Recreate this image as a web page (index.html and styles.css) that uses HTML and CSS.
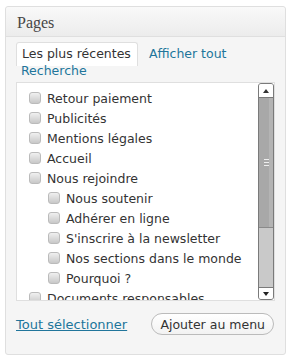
FILE: index.html
```html
<!doctype html>
<html lang="fr">
    <head>
        <title>Pages</title>
        <link rel="stylesheet" href="styles.css">
    </head>
    <body>
        <div class="postbox">
            <h3 class="hndle">Pages</h3>
            <div class="inside">
                <ul class="tabs">
                    <li class="tab active">Les plus récentes</li>
                    <li class="tab"><a href="#">Afficher tout</a></li>
                    <li class="tab"><a href="#">Recherche</a></li>
                </ul>
                <div class="panel">
                    <ul class="checklist">
                        <li><span class="check"></span>Retour paiement</li>
                        <li><span class="check"></span>Publicités</li>
                        <li><span class="check"></span>Mentions légales</li>
                        <li><span class="check"></span>Accueil</li>
                        <li>
                            <span class="check"></span>Nous rejoindre
                            <ul class="children">
                                <li><span class="check"></span>Nous soutenir</li>
                                <li><span class="check"></span>Adhérer en ligne</li>
                                <li><span class="check"></span>S'inscrire à la newsletter</li>
                                <li><span class="check"></span>Nos sections dans le monde</li>
                                <li><span class="check"></span>Pourquoi ?</li>
                            </ul>
                        </li>
                        <li><span class="check"></span>Documents responsables</li>
                    </ul>
                    <div class="scrollbar">
                        <div class="arrow up"></div>
                        <div class="thumb"><span class="grip"></span></div>
                        <div class="track"></div>
                        <div class="arrow down"></div>
                    </div>
                </div>
                <div class="actions">
                    <a href="#" class="select-all">Tout sélectionner</a>
                    <button class="button">Ajouter au menu</button>
                </div>
            </div>
        </div>
    </body>
</html>
```

FILE: styles.css
```css
body {
    margin: 0;
    padding: 6px 5px;
    font-family: "DejaVu Sans", Verdana, sans-serif;
    font-size: 12.5px;
    color: #333;
    background: #fff;
}
a {
    color: #21759b;
    text-decoration: none;
}
.postbox {
    border: 1px solid #dfdfdf;
    border-radius: 3px;
    background: #f5f5f5;
}
.hndle {
    margin: 0;
    height: 29px;
    line-height: 31px;
    padding: 0 11px;
    font-family: "Liberation Serif", Georgia, serif;
    font-size: 16px;
    font-weight: normal;
    color: #464646;
    border-bottom: 1px solid #dfdfdf;
    background: linear-gradient(#f9f9f9, #ececec);
    border-radius: 3px 3px 0 0;
}
.inside {
    padding: 8px 10px 19px;
}
.tabs {
    list-style: none;
    margin: 0 0 3px;
    padding: 0;
    line-height: 17px;
}
.tab {
    display: inline;
    padding: 3px 6px 5px 5px;
    margin-right: 2px;
}
.tab.active {
    background: #fff;
    border: 1px solid #dfdfdf;
    border-bottom: none;
    border-radius: 3px 3px 0 0;
    color: #333;
}
.panel {
    display: flex;
    height: 217px;
    border: 1px solid #dfdfdf;
    background: #fff;
    overflow: hidden;
}
.checklist {
    flex: 1;
    list-style: none;
    margin: 0;
    padding: 6px 0 0 12px;
    line-height: 20px;
    white-space: nowrap;
    overflow: hidden;
}
.checklist li {
    margin: 0;
}
.children {
    list-style: none;
    margin: 0;
    padding: 0 0 0 19px;
}
.check {
    display: inline-block;
    width: 10px;
    height: 10px;
    margin-right: 6px;
    vertical-align: -1px;
    border: 1px solid #bbb;
    border-radius: 3px;
    background: linear-gradient(#f0f0f0, #c8c8c8);
}
.scrollbar {
    width: 14px;
    display: flex;
    flex-direction: column;
    border: 1px solid #7a7a7a;
    border-radius: 3px;
    background: #c9c9c9;
}
.arrow {
    position: relative;
    background: #fff;
}
.arrow.up {
    height: 13px;
    border-bottom: 1px solid #7a7a7a;
    border-radius: 2px 2px 0 0;
}
.arrow.down {
    height: 11px;
    border-top: 1px solid #7a7a7a;
    border-radius: 0 0 2px 2px;
}
.arrow::after {
    content: "";
    position: absolute;
    left: 4px;
    border-left: 3px solid transparent;
    border-right: 3px solid transparent;
}
.arrow.up::after {
    top: 5px;
    border-bottom: 4px solid #333;
}
.arrow.down::after {
    top: 4px;
    border-top: 4px solid #222;
}
.thumb {
    height: 129px;
    display: flex;
    align-items: center;
    justify-content: center;
    border-bottom: 1px solid #8a8a8a;
    background: linear-gradient(90deg, #a8a8a8 70%, #b4b4b4 70%);
}
.grip {
    width: 5px;
    height: 5px;
    border-top: 1px solid #eee;
    border-bottom: 1px solid #eee;
    background: linear-gradient(transparent 2px, #eee 2px, #eee 3px, transparent 3px);
}
.track {
    flex: 1;
}
.actions {
    display: flex;
    justify-content: space-between;
    align-items: center;
    margin-top: 12px;
}
.select-all {
    font-size: 13px;
    text-decoration: underline;
}
.button {
    height: 22px;
    padding: 0 8px;
    margin-right: 1px;
    font-family: "DejaVu Sans", Verdana, sans-serif;
    font-size: 12.5px;
    color: #333;
    border: 1px solid #bbb;
    border-radius: 11px;
    background: linear-gradient(#fff, #f2f2f2);
}
```
